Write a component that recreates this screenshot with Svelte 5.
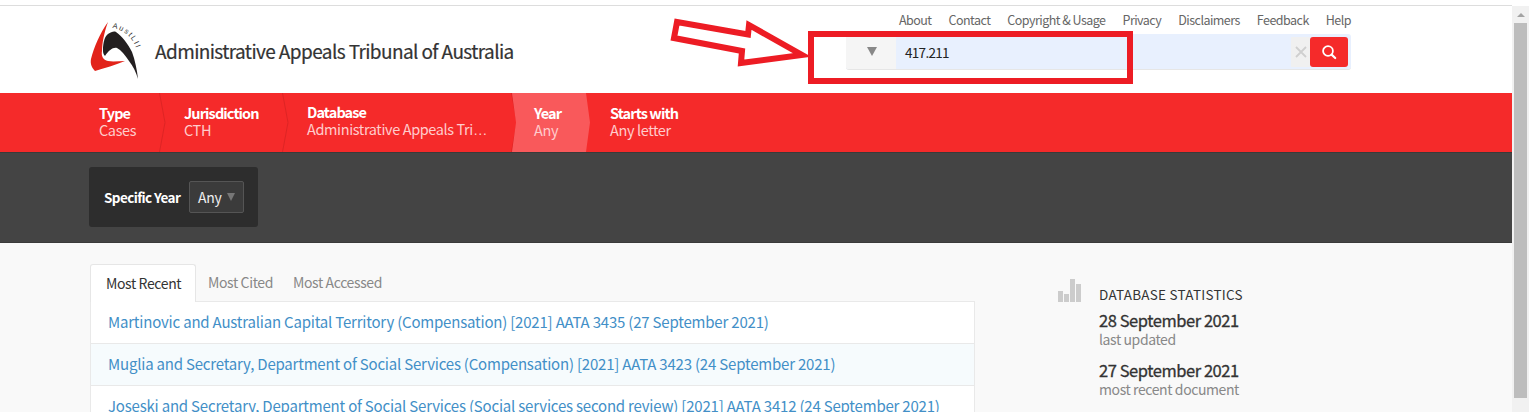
<script>
  const topLinks = ['About', 'Contact', 'Copyright & Usage', 'Privacy', 'Disclaimers', 'Feedback', 'Help'];

  const crumbs = [
    { title: 'Type', value: 'Cases', width: 70 },
    { title: 'Jurisdiction', value: 'CTH', width: 123 },
    { title: 'Database', value: 'Administrative Appeals Tri', cut: true, width: 229 },
    { title: 'Year', value: 'Any', width: 74, active: true },
    { title: 'Starts with', value: 'Any letter' }
  ];

  const cases = [
    'Martinovic and Australian Capital Territory (Compensation) [2021] AATA 3435 (27 September 2021)',
    'Muglia and Secretary, Department of Social Services (Compensation) [2021] AATA 3423 (24 September 2021)',
    'Joseski and Secretary, Department of Social Services (Social services second review) [2021] AATA 3412 (24 September 2021)'
  ];

  const stats = [
    { date: '28 September 2021', label: 'last updated' },
    { date: '27 September 2021', label: 'most recent document' }
  ];
</script>

<div class="window">
  <div class="page">
    <div class="top-strip"></div>

    <header class="site-header">
      <div class="brand">
        <svg class="logo" viewBox="88 18 56 62" width="56" height="62" aria-hidden="true">
          <path d="M108 21 C100 32 94 46 91 58 C90 63 92 67 95 70 C104 67 116 64 125 60 C119 60 113 61 108 60 C103 59 101 55 102 50 C102 42 104 32 108 21 Z" fill="#e2231a" />
          <path d="M103 49 C103 41 105 35 108 33 C111 31 114 30 116 31 C122 35 128 43 132 51 C135 59 137 69 138 78 C136 71 133 65 129 60 C125 54 121 49 117 47 C113 46 109 49 105 55 C103 53 103 51 103 49 Z" fill="#231f20" />
          <path id="logo-arc" d="M112 27 Q134 30 139 58" fill="none" />
          <text class="logo-text"><textPath href="#logo-arc">AustLII</textPath></text>
        </svg>
        <h1>Administrative Appeals Tribunal of Australia</h1>
      </div>

      <div class="header-right">
        <nav class="top-links">
          {#each topLinks as link}
            <a href="#top">{link}</a>
          {/each}
        </nav>
        <form class="search">
          <div class="search-type"><span class="tri"></span></div>
          <div class="search-value">417.211</div>
          <button type="button" class="search-clear" aria-label="Clear">
            <svg viewBox="0 0 12 12" width="12" height="12"><path d="M1 1 L11 11 M11 1 L1 11" stroke="#cfcfcf" stroke-width="1.8" fill="none" /></svg>
          </button>
          <button type="button" class="search-go" aria-label="Search">
            <svg viewBox="0 0 16 16" width="16" height="16"><circle cx="7" cy="7" r="4.9" stroke="#fff" stroke-width="1.8" fill="none" /><path d="M10.6 10.6 L14.2 14" stroke="#fff" stroke-width="2.2" stroke-linecap="round" /></svg>
          </button>
        </form>
      </div>
    </header>

    <nav class="crumbs">
      {#each crumbs as crumb}
        <div class="crumb" class:active={crumb.active} style:width={crumb.width ? crumb.width + 'px' : null}>
          <strong>{crumb.title}</strong>
          <span>{crumb.value}{#if crumb.cut}<i class="dots">…</i>{/if}</span>
          {#if crumb.width && !crumb.active}
            <svg class="sep" viewBox="0 0 7 59" width="7" height="59"><path d="M0.5 0 L6 29.5 L0.5 59" fill="none" stroke="#dd2525" /></svg>
          {/if}
        </div>
      {/each}
    </nav>

    <section class="filter-band">
      <div class="filter-box">
        <label for="year">Specific Year</label>
        <div class="fake-select" id="year">Any <span class="tri small"></span></div>
      </div>
    </section>

    <main class="content">
      <div class="recent">
        <div class="tabs">
          <div class="tab current">Most Recent</div>
          <div class="tab">Most Cited</div>
          <div class="tab">Most Accessed</div>
        </div>
        <ul class="case-list">
          {#each cases as item}
            <li><a href="#top">{item}</a></li>
          {/each}
        </ul>
      </div>

      <aside class="stats">
        <svg class="stats-icon" viewBox="0 0 23 23" width="23" height="23">
          <rect x="0" y="12" width="5" height="11" fill="#ccc" />
          <rect x="6" y="15" width="5" height="8" fill="#ccc" />
          <rect x="12" y="0" width="5" height="23" fill="#ccc" />
          <rect x="18" y="5" width="5" height="18" fill="#ccc" />
        </svg>
        <div>
          <h2>Database Statistics</h2>
          {#each stats as stat}
            <div class="stat">
              <strong>{stat.date}</strong>
              <span>{stat.label}</span>
            </div>
          {/each}
        </div>
      </aside>
    </main>

    <!-- red annotation drawn on top of the screenshot -->
    <svg class="arrow" viewBox="0 0 150 60" width="150" height="60" aria-hidden="true">
      <path d="M9 7 L80 19.500 L81 10 L134 40 L73 48 L74 36 L6 23 Z" fill="#fff" stroke="#ed1c24" stroke-width="6" />
    </svg>
    <div class="callout"></div>
  </div>

  <div class="scrollbar">
    <span class="scroll-up"></span>
    <div class="thumb"></div>
  </div>
</div>

<style>
  :global(body) {
    margin: 0;
    overflow: hidden;
  }

  .window {
    display: flex;
    height: 412px;
    overflow: hidden;
    font-family: "Noto Sans CJK SC", "Noto Sans", sans-serif;
    color: #333;
  }

  .page {
    position: relative;
    flex: 1;
    background: #f9f9f9;
    min-width: 0;
  }

  .top-strip {
    height: 5px;
    background: #fff;
    border-bottom: 1px solid #ddd;
  }

  .site-header {
    display: flex;
    justify-content: space-between;
    height: 87px;
    padding: 0 161px 0 88px;
    background: #fff;
  }

  .brand {
    display: flex;
    align-items: center;
    gap: 11px;
    height: 87px;
  }

  .logo {
    flex: none;
  }

  .logo-text {
    font-family: "Liberation Sans", sans-serif;
    font-size: 7.500px;
    letter-spacing: 1.6px;
    fill: #333;
  }

  h1 {
    margin: 2px 0 0;
    font-size: 19px;
    font-weight: 400;
    letter-spacing: -0.6px;
    white-space: nowrap;
    color: #333;
    -webkit-text-stroke: 0.2px #333;
  }

  .header-right {
    display: flex;
    flex-direction: column;
    align-items: flex-end;
    width: 505px;
  }

  .top-links {
    display: flex;
    gap: 17px;
    margin-top: 5px;
    height: 23px;
    line-height: 17px;
    font-size: 12.500px;
    letter-spacing: -0.53px;
    white-space: nowrap;
  }

  .top-links a {
    color: #666;
    text-decoration: none;
  }

  .search {
    display: flex;
    align-items: center;
    width: 505px;
    height: 36px;
    box-sizing: border-box;
    background: #e8f0fe;
    border-bottom: 1px solid #e6e6e6;
    border-radius: 3px;
    overflow: hidden;
    padding-right: 3px;
  }

  .search-type {
    display: flex;
    align-items: center;
    justify-content: center;
    width: 50px;
    height: 100%;
    box-sizing: border-box;
    padding-left: 2px;
    background: #f5f5f5;
  }

  .tri {
    display: block;
    width: 0;
    height: 0;
    border-left: 5px solid transparent;
    border-right: 5px solid transparent;
    border-top: 9px solid #888;
  }

  .tri.small {
    border-left-width: 4px;
    border-right-width: 4px;
    border-top-width: 8px;
    border-top-color: #777;
  }

  .search-value {
    flex: 1;
    padding-left: 9px;
    font-size: 13.500px;
    letter-spacing: -0.7px;
    color: #222;
  }

  .search-clear,
  .search-go {
    display: flex;
    align-items: center;
    justify-content: center;
    height: 30px;
    border: 0;
    padding: 0;
  }

  .search-clear {
    width: 19px;
    background: #f0f0f0;
  }

  .search-go {
    width: 38px;
    background: #f52a2a;
    border-radius: 3px;
  }

  .crumbs {
    display: flex;
    height: 59px;
    padding-left: 90px;
    background: #f52a2a;
    box-sizing: border-box;
  }

  .crumb {
    position: relative;
    display: flex;
    flex-direction: column;
    justify-content: center;
    flex: none;
    box-sizing: border-box;
    padding: 0 0 4px 24px;
    font-size: 14.500px;
    line-height: 17px;
    color: #fff;
    white-space: nowrap;
  }

  .crumb:first-child {
    padding-left: 9px;
  }

  .crumb strong {
    font-weight: 700;
    letter-spacing: -0.9px;
  }

  .crumb span {
    letter-spacing: -0.38px;
    color: #fcc;
  }

  .dots {
    font-family: "Liberation Sans", sans-serif;
    font-style: normal;
  }

  .crumb.active {
    padding-left: 22px;
    width: 78px !important;
    margin-right: -4px;
    background: #f9595b;
    clip-path: polygon(0 0, 74px 0, 78px 50%, 74px 100%, 0 100%, 4px 50%);
  }

  .sep {
    position: absolute;
    top: 0;
    right: -6px;
  }

  .filter-band {
    height: 91px;
    box-sizing: border-box;
    padding: 14px 0 0 89px;
    background: #444;
    border-top: 1px solid #3a3a3a;
    border-bottom: 1px solid #3a3a3a;
  }

  .filter-box {
    display: flex;
    align-items: center;
    width: 169px;
    height: 60px;
    box-sizing: border-box;
    padding-left: 15px;
    background: #2d2d2d;
    border-radius: 3px;
  }

  .filter-box label {
    flex: none;
    width: 85px;
    font-size: 13.500px;
    font-weight: 700;
    letter-spacing: -0.6px;
    white-space: nowrap;
    color: #fff;
  }

  .fake-select {
    display: flex;
    align-items: center;
    gap: 6px;
    width: 55px;
    height: 32px;
    box-sizing: border-box;
    padding-left: 8px;
    font-size: 14px;
    letter-spacing: -0.3px;
    color: #eee;
    background: #3b3b3b;
    border: 1px solid #555;
    border-radius: 2px;
  }

  .content {
    display: flex;
    padding: 21px 0 0 90px;
  }

  .recent {
    width: 885px;
    flex: none;
  }

  .tabs {
    display: flex;
    height: 37px;
    position: relative;
  }

  .tab {
    padding: 0 10px;
    line-height: 37px;
    font-size: 14px;
    letter-spacing: -0.38px;
    white-space: nowrap;
    color: #888;
  }

  .tab.current {
    width: 106px;
    height: 38px;
    box-sizing: border-box;
    margin-right: 2px;
    padding: 0 15px;
    color: #333;
    background: #fff;
    border: 1px solid #e6e6e6;
    border-bottom: 0;
    border-radius: 3px 3px 0 0;
    position: relative;
    z-index: 1;
  }

  .case-list {
    margin: 0;
    padding: 0;
    list-style: none;
    background: #fff;
    border: 1px solid #e9e9e9;
    border-width: 1px 1px 0;
  }

  .case-list li {
    height: 42px;
    box-sizing: border-box;
    padding-left: 17px;
    line-height: 40px;
    font-size: 15px;
    letter-spacing: -0.2px;
    white-space: nowrap;
    border-bottom: 1px solid #e9e9e9;
  }

  .case-list li:nth-child(2) {
    background: #f6fbfd;
  }

  .case-list a {
    color: #428fc7;
    text-decoration: none;
  }

  .stats {
    display: flex;
    gap: 18px;
    margin: 15px 0 0 83px;
  }

  .stats h2 {
    margin: 6px 0 0;
    font-size: 13.500px;
    line-height: 18px;
    font-weight: 400;
    letter-spacing: 0.25px;
    text-transform: uppercase;
    color: #333;
  }

  .stat {
    margin-top: 7px;
    margin-bottom: 12px;
    display: flex;
    flex-direction: column;
  }

  .stat strong {
    font-size: 16.500px;
    line-height: 20px;
    font-weight: 400;
    letter-spacing: -0.45px;
    -webkit-text-stroke: 0.3px #333;
  }

  .stat span {
    margin-top: 1px;
    font-size: 14px;
    line-height: 17px;
    letter-spacing: -0.4px;
    color: #888;
  }

  .arrow {
    position: absolute;
    left: 668px;
    top: 15px;
  }

  .callout {
    position: absolute;
    left: 808px;
    top: 31px;
    width: 325px;
    height: 53px;
    box-sizing: border-box;
    border: 6px solid #ed1c24;
  }

  .scrollbar {
    flex: none;
    display: flex;
    flex-direction: column;
    align-items: center;
    width: 17px;
    background: #f1f1f1;
    border-top: 6px solid #fff;
    box-sizing: border-box;
  }

  .scroll-up {
    width: 0;
    height: 0;
    margin-top: 7px;
    border-left: 4px solid transparent;
    border-right: 4px solid transparent;
    border-bottom: 4px solid #a3a3a3;
  }

  .thumb {
    width: 13px;
    height: 375px;
    margin-top: 6px;
    background: #bdbdbd;
  }
</style>
